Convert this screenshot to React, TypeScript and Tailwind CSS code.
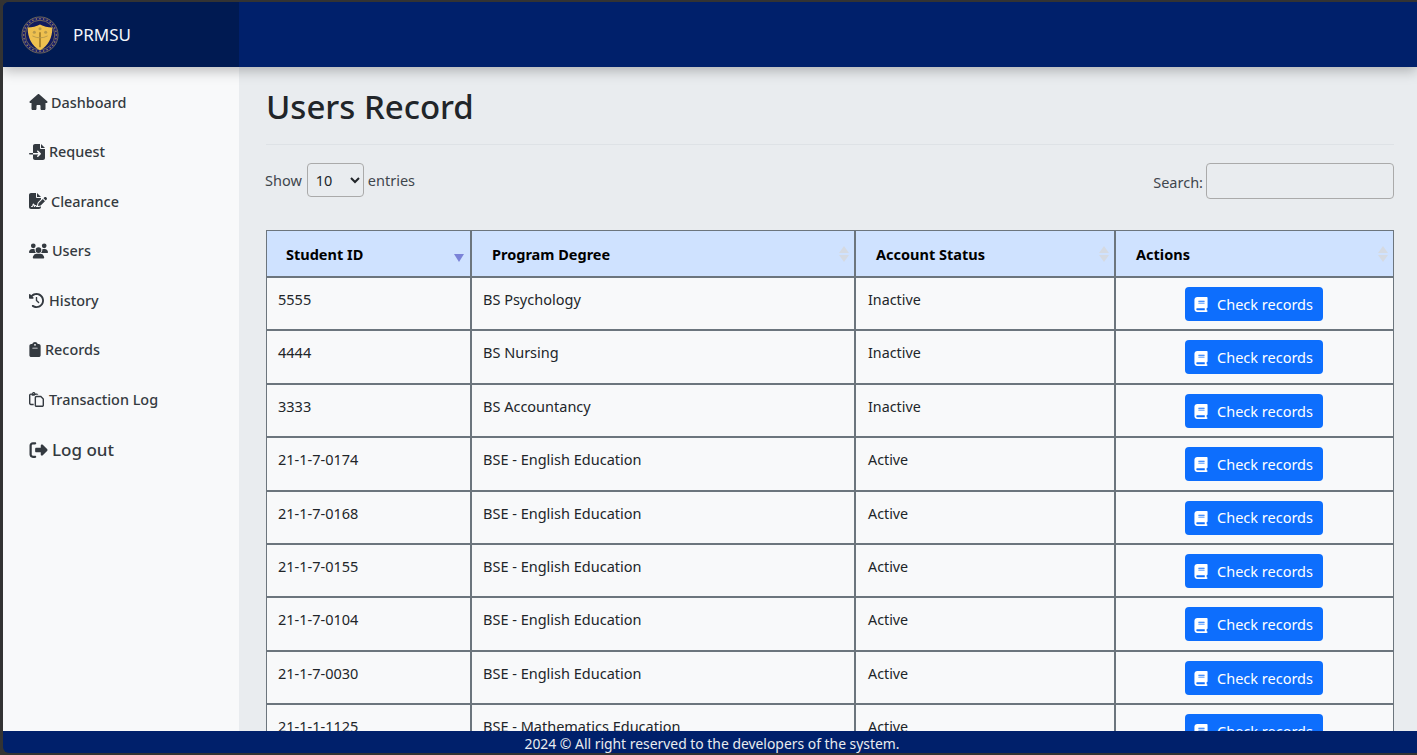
import { useState } from "react";
import type { ReactNode } from "react";
import {
  FaBook,
  FaClipboard,
  FaClockRotateLeft,
  FaFileImport,
  FaFileSignature,
  FaHouse,
  FaRegPaste,
  FaRightFromBracket,
  FaUsers
} from "react-icons/fa6";

type NavItem = { label: string; icon: ReactNode; gap: string };

const navItems: NavItem[] = [
  { label: "Dashboard", icon: <FaHouse className="h-[16px] w-[19px]" />, gap: "gap-[3px]" },
  { label: "Request", icon: <FaFileImport className="h-[16px] w-[16px]" />, gap: "gap-[4px]" },
  { label: "Clearance", icon: <FaFileSignature className="h-[16px] w-[18px]" />, gap: "gap-[4px]" },
  { label: "Users", icon: <FaUsers className="h-[16px] w-[19px]" />, gap: "gap-[4px]" },
  { label: "History", icon: <FaClockRotateLeft className="h-[15px] w-[15px]" />, gap: "gap-[5px]" },
  { label: "Records", icon: <FaClipboard className="h-[15px] w-[12px]" />, gap: "gap-[4px]" },
  { label: "Transaction Log", icon: <FaRegPaste className="h-[15px] w-[15px]" />, gap: "gap-[5px]" }
];

const rows = [
  ["5555", "BS Psychology", "Inactive"],
  ["4444", "BS Nursing", "Inactive"],
  ["3333", "BS Accountancy", "Inactive"],
  ["21-1-7-0174", "BSE - English Education", "Active"],
  ["21-1-7-0168", "BSE - English Education", "Active"],
  ["21-1-7-0155", "BSE - English Education", "Active"],
  ["21-1-7-0104", "BSE - English Education", "Active"],
  ["21-1-7-0030", "BSE - English Education", "Active"],
  ["21-1-1-1125", "BSE - Mathematics Education", "Active"]
];

function Seal() {
  const dots = Array.from({ length: 28 }, (_, i) => (i * Math.PI * 2) / 28);
  return (
    <svg viewBox="0 0 40 40" className="h-[38px] w-[38px]">
      <circle cx="20" cy="20" r="19" fill="#1a1f6e" stroke="#8d7f58" strokeWidth="0.8" />
      <circle cx="20" cy="20" r="15.5" fill="#111b5e" stroke="#8d7f58" strokeWidth="0.8" />
      {dots.map((a) => (
        <circle key={a} cx={20 + 17.2 * Math.cos(a)} cy={20 + 17.2 * Math.sin(a)} r="0.8" fill="#a8925a" />
      ))}
      <path d="M7 12 C12 12 16 11 20 9 C24 11 28 12 33 12 C33 23 29 31 20 36 C11 31 7 23 7 12 Z" fill="#eec04f" />
      <path d="M19 17 H21 V33 H19 Z" fill="#a8842f" />
      <circle cx="14" cy="17" r="1.6" fill="#b99a4a" />
      <circle cx="26" cy="17" r="1.6" fill="#b99a4a" />
      <circle cx="20" cy="13.5" r="1.6" fill="#b99a4a" />
      <path d="M12 21 Q20 25 28 21" fill="none" stroke="#b99a4a" strokeWidth="1" />
    </svg>
  );
}

function SortIcon({ active }: { active?: boolean }) {
  if (active) {
    return (
      <svg viewBox="0 0 10 8" className="absolute right-[6px] top-[23px] h-[8px] w-[10px]">
        <path d="M0 0 H10 L5 8 Z" fill="#7b83d8" />
      </svg>
    );
  }
  return (
    <svg viewBox="0 0 10 16" className="absolute right-[5px] top-[15px] h-[16px] w-[10px]">
      <path d="M5 0 L10 7 H0 Z M0 9 H10 L5 16 Z" fill="#d5dae2" />
    </svg>
  );
}

export default function App() {
  const [search, setSearch] = useState("");

  return (
    <div className="flex h-[755px] flex-col overflow-hidden bg-[#333333] pb-[2px] pl-[3px] pt-[2px] font-['Noto_Sans',sans-serif] text-[#212529]">
      <div className="flex min-h-0 flex-1 flex-col overflow-hidden rounded-l-[6px]">
        <header className="relative z-10 flex h-[65px] shrink-0 bg-[#00206b] shadow-[0_4px_12px_rgba(0,0,0,0.25)]">
          <div className="flex w-[236px] items-center gap-[14px] bg-[#001a52] pl-[18px] pt-[1px] text-[17px] text-[#f4f6fb]">
            <Seal />
            <span>PRMSU</span>
          </div>
        </header>

        <div className="flex min-h-0 flex-1">
          <aside className="w-[236px] shrink-0 bg-[#f8f9fa] pl-[26px] pt-[23.6px] text-[14.4px] font-medium text-[#343a40]">
            <ul>
              {navItems.map((item) => (
                <li key={item.label} className={`flex h-[49.5px] items-start pt-[1px] ${item.gap}`}>
                  <span className="flex h-[21px] items-center">{item.icon}</span>
                  <span className="leading-[21px]">{item.label}</span>
                </li>
              ))}
              <li className="flex items-center gap-[4px] text-[17px]">
                <FaRightFromBracket className="h-[18px] w-[19px]" />
                <span>Log out</span>
              </li>
            </ul>
          </aside>

          <main className="min-w-0 flex-1 overflow-hidden bg-[#e9ecef] pl-[27px] pr-[23px] pt-[18px]">
            <h1 className="border-b border-[#dee2e6] pb-[15px] text-[33px] font-medium leading-[44px]">
              Users Record
            </h1>

            <div className="mt-[18px] flex items-start justify-between text-[14.5px] text-[#3f464d]">
              <label className="flex h-[34px] items-center gap-[4px] -ml-px">
                <span className="pt-[2px]">Show</span>
                <select className="ml-px h-[34px] w-[57px] rounded-[4px] border border-[#aaaaaa] pl-[4px] text-[#212529]">
                  <option>10</option>
                  <option>25</option>
                  <option>50</option>
                  <option>100</option>
                </select>
                <span className="pt-[2px]">entries</span>
              </label>
              <label className="flex items-center gap-[3px]">
                <span className="pt-[4px]">Search:</span>
                <input
                  value={search}
                  onChange={(e) => setSearch(e.target.value)}
                  className="h-[36px] w-[188px] rounded-[4px] border border-[#aaaaaa] bg-transparent px-2"
                />
              </label>
            </div>

            <table className="mt-[31px] w-[1128px] table-fixed border-separate border-spacing-0 border-l border-t border-[#6c757d] text-[14.5px] text-[#212529]">
              <colgroup>
                <col className="w-[205px]" />
                <col className="w-[384px]" />
                <col className="w-[260px]" />
                <col />
              </colgroup>
              <thead>
                <tr className="h-[47px] bg-[#cfe2ff] text-black">
                  <th className="relative border-b-2 border-r-2 border-[#6c757d] pl-[19px] pt-[2px] text-left font-bold">
                    Student ID
                    <SortIcon active />
                  </th>
                  <th className="relative border-b-2 border-r-2 border-[#6c757d] pl-[20px] pt-[2px] text-left font-bold">
                    Program Degree
                    <SortIcon />
                  </th>
                  <th className="relative border-b-2 border-r-2 border-[#6c757d] pl-[20px] pt-[2px] text-left font-bold">
                    Account Status
                    <SortIcon />
                  </th>
                  <th className="relative border-b-2 border-r border-[#6c757d] pl-[20px] pt-[2px] text-left font-bold">
                    Actions
                    <SortIcon />
                  </th>
                </tr>
              </thead>
              <tbody>
                {rows.map((row) => (
                  <tr key={row[0]} className="h-[53.4px] bg-[#f8f9fa] align-top">
                    <td className="border-b-2 border-r-2 border-[#6c757d] pl-[11px] pt-[11px]">{row[0]}</td>
                    <td className="border-b-2 border-r-2 border-[#6c757d] pl-[11px] pt-[11px]">{row[1]}</td>
                    <td className="border-b-2 border-r-2 border-[#6c757d] pl-[12px] pt-[11px] text-[14.3px]">{row[2]}</td>
                    <td className="border-b-2 border-r border-[#6c757d] pr-[2px] pt-[9px] text-center">
                      <button className="inline-flex h-[34px] w-[138px] items-center justify-center gap-[9px] rounded-[4px] bg-[#0d6efd] pt-[1.5px] text-[14.5px] text-white">
                        <FaBook className="h-[15px] w-[14px]" />
                        Check records
                      </button>
                    </td>
                  </tr>
                ))}
              </tbody>
            </table>
          </main>
        </div>

        <footer className="relative z-10 h-[22px] shrink-0 bg-[#00206b] pl-[4px] text-center text-[13.9px] leading-[26px] text-[#e9ecef]">
          2024 © All right reserved to the developers of the system.
        </footer>
      </div>
    </div>
  );
}
